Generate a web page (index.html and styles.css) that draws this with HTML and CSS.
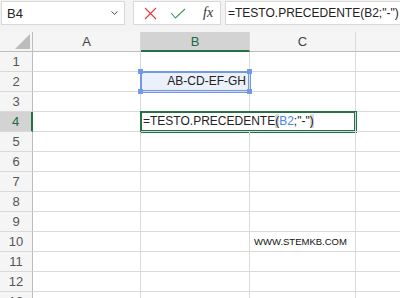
FILE: index.html
```html
<!DOCTYPE html>
<html lang="it">
<head>
    <meta charset="UTF-8">
    <meta name="viewport" content="width=device-width, initial-scale=1.0">
    <title>TESTO.PRECEDENTE</title>
    <link rel="stylesheet" href="styles.css">
</head>
<body>
    <!-- Barra della formula -->
    <div class="formula-bar">
        <div class="name-box">
            <span>B4</span>
            <svg class="chevron" width="7" height="4" viewBox="0 0 7 4"><path d="M0.5 0.5 L3.5 3.3 L6.5 0.5" fill="none" stroke="#444" stroke-width="1"/></svg>
        </div>
        <div class="fx-buttons">
            <svg width="13" height="13" viewBox="0 0 13 13"><path d="M1 1 L12 12 M12 1 L1 12" stroke="#e2393b" stroke-width="1.1" fill="none"/></svg>
            <svg width="16" height="11" viewBox="0 0 16 11"><path d="M1 5 L5.5 10 L15 1" stroke="#3c9a4a" stroke-width="1.1" fill="none"/></svg>
            <i class="fx">fx</i>
        </div>
        <div class="formula-input">=TESTO.PRECEDENTE(B2;"-")</div>
    </div>

    <!-- Foglio -->
    <div class="sheet">
        <div class="corner"><span class="tri"></span></div>
        <div class="col-head">A</div>
        <div class="col-head active">B</div>
        <div class="col-head">C</div>
        <div class="col-head last"></div>

        <div class="row-head">1</div><div class="cell"></div><div class="cell"></div><div class="cell"></div><div class="cell last"></div>
        <div class="row-head">2</div><div class="cell"></div>
        <div class="cell b2">
            AB-CD-EF-GH
            <span class="handle tl"></span><span class="handle tr"></span>
            <span class="handle bl"></span><span class="handle br"></span>
        </div>
        <div class="cell"></div><div class="cell last"></div>
        <div class="row-head">3</div><div class="cell"></div><div class="cell"></div><div class="cell"></div><div class="cell last"></div>
        <div class="row-head active">4</div><div class="cell"></div>
        <div class="cell edit">=TESTO.PRECEDENTE<span class="par">(</span><span class="ref">B2</span>;"-"<span class="par">)</span></div>
        <div class="cell last"></div>
        <div class="row-head">5</div><div class="cell"></div><div class="cell"></div><div class="cell"></div><div class="cell last"></div>
        <div class="row-head">6</div><div class="cell"></div><div class="cell"></div><div class="cell"></div><div class="cell last"></div>
        <div class="row-head">7</div><div class="cell"></div><div class="cell"></div><div class="cell"></div><div class="cell last"></div>
        <div class="row-head">8</div><div class="cell"></div><div class="cell"></div><div class="cell"></div><div class="cell last"></div>
        <div class="row-head">9</div><div class="cell"></div><div class="cell"></div><div class="cell"></div><div class="cell last"></div>
        <div class="row-head">10</div><div class="cell"></div><div class="cell"></div><div class="cell site">WWW.STEMKB.COM</div><div class="cell last"></div>
        <div class="row-head">11</div><div class="cell"></div><div class="cell"></div><div class="cell"></div><div class="cell last"></div>
        <div class="row-head">12</div><div class="cell"></div><div class="cell"></div><div class="cell"></div><div class="cell last"></div>
        <div class="row-head">13</div><div class="cell"></div><div class="cell"></div><div class="cell"></div><div class="cell last"></div>
    </div>
</body>
</html>
```

FILE: styles.css
```css
/* Pagina */
body {
    margin: 0;
    width: 400px;
    height: 298px;
    overflow: hidden;
    background: #fff;
    font-family: "Liberation Sans", Arial, sans-serif;
    color: #222;
}

/* Barra della formula */
.formula-bar {
    display: flex;
    align-items: flex-start;
    height: 32px;
    padding: 1px 0 0 1px;
    box-sizing: border-box;
    background: #f3f3f3;
}

.name-box {
    flex: none;
    width: 124px;
    height: 24px;
    box-sizing: border-box;
    border: 1px solid #d8d8d8;
    background: #fff;
    display: flex;
    align-items: center;
    justify-content: space-between;
    padding: 0 6px 0 5px;
    font-size: 13px;
}

.fx-buttons {
    flex: none;
    margin-left: 8px;
    width: 88px;
    height: 24px;
    box-sizing: border-box;
    border: 1px solid #d8d8d8;
    background: #fff;
    display: flex;
    align-items: center;
    padding-left: 10px;
    gap: 13px;
}

.fx {
    font-family: "Liberation Serif", serif;
    font-size: 14px;
    color: #333;
    margin-left: 4px;
}

.formula-input {
    margin-left: 4px;
    flex: 1;
    height: 24px;
    box-sizing: border-box;
    border: 1px solid #d8d8d8;
    border-right: none;
    background: #fff;
    padding-left: 2px;
    line-height: 22px;
    font-size: 12px;
    white-space: nowrap;
}

/* Foglio */
.sheet {
    display: grid;
    grid-template-columns: 33px 108px 109px 106px 1fr;
    grid-auto-rows: 20px;
    font-size: 12px;
}

.sheet > div {
    box-sizing: border-box;
    border-right: 1px solid #d9d9d9;
    border-bottom: 1px solid #d9d9d9;
}

.sheet > .last {
    border-right: none;
}

.corner {
    position: relative;
    background: #f5f5f5;
    border-right-color: #bdbdbd !important;
    border-bottom-color: #bdbdbd !important;
}

.tri {
    position: absolute;
    right: 2px;
    bottom: 2px;
    width: 0;
    height: 0;
    border-left: 15px solid transparent;
    border-bottom: 15px solid #bcbcbc;
}

.col-head {
    background: #f5f5f5;
    color: #444;
    text-align: center;
    line-height: 20px;
    font-size: 13px;
    border-bottom-color: #bdbdbd !important;
}

.col-head.active {
    background: #d3d3d3;
    color: #1d6b3e;
    border-bottom: 2px solid #217346 !important;
    line-height: 19px;
}

.row-head {
    background: #f5f5f5;
    color: #555;
    text-align: center;
    line-height: 20px;
    font-size: 13px;
    border-right-color: #bdbdbd !important;
}

.row-head.active {
    background: #d3d3d3;
    color: #1d6b3e;
    border-right: 2px solid #217346 !important;
}

.cell {
    line-height: 19px;
    white-space: nowrap;
}

/* Selezione B2 */
.b2 {
    position: relative;
    background: #ebf1fb;
    text-align: right;
    padding-right: 3px;
    box-shadow: 0 0 0 1px #7298e6, inset 0 0 0 1px #7298e6;
}

.handle {
    position: absolute;
    width: 5px;
    height: 5px;
    background: #7298e6;
}

.handle.tl { left: -3px; top: -3px; }
.handle.tr { right: -3px; top: -3px; }
.handle.bl { left: -3px; bottom: -3px; }
.handle.br { right: -3px; bottom: -3px; }

/* Cella in modifica */
.edit {
    grid-column: span 2;
    background: #fff;
    box-shadow: 0 0 0 1px #217346, inset 0 0 0 1px #217346;
    padding-left: 2px;
}

.par {
    background: #dcdcdc;
}

.ref {
    color: #4a86e8;
}

.site {
    font-size: 9.5px;
    padding-left: 4px;
    color: #111;
}
```
